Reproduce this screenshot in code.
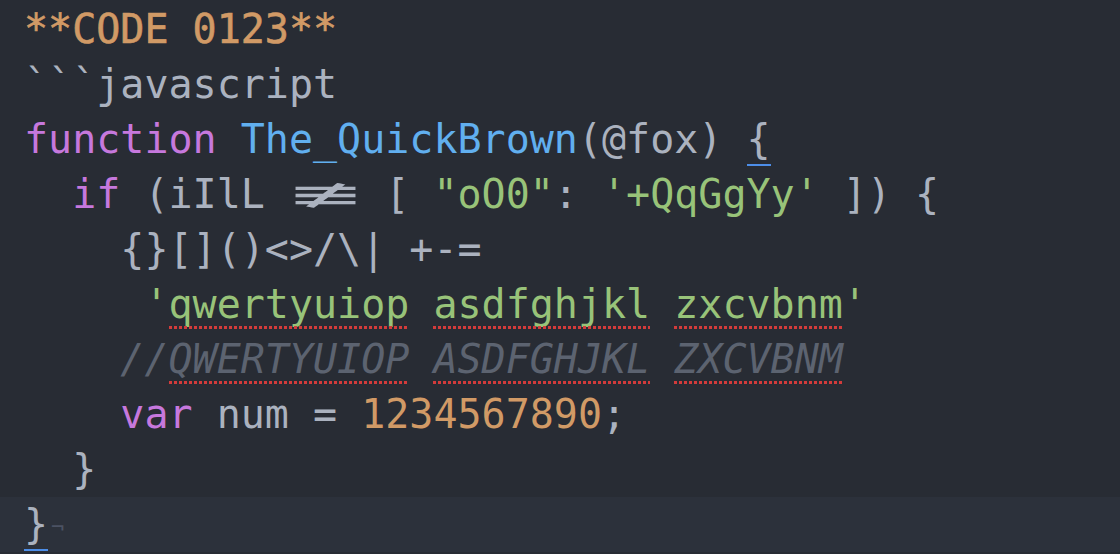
const orange = "text-[#d19a66]";
const purple = "text-[#c678dd]";
const blue = "text-[#61afef]";
const green = "text-[#98c379]";

// red dotted spell-check underline
const Typo = ({ children, className }: { children: React.ReactNode; className?: string }) => (
  <span className={`relative ${className ?? ""}`}>
    {children}
    <span className="absolute left-0 right-0 -bottom-[2px] h-[3px] bg-[repeating-linear-gradient(90deg,#d23b3b_0_3px,transparent_3px_5px)]" />
  </span>
);

// bracket match marker
const Match = ({ children }: { children: React.ReactNode }) => (
  <span className="relative">
    {children}
    <span className="absolute left-0 right-0 -bottom-[4px] h-[2px] bg-[#4d8ee8]" />
  </span>
);

const Line = ({ children, active }: { children?: React.ReactNode; active?: boolean }) => (
  <div className={`h-[55px] pl-[24px] whitespace-pre ${active ? "bg-[#2c313b]" : ""}`}>{children}</div>
);

export default function App() {
  return (
    <div className="h-[554px] w-full overflow-hidden bg-[#282c34] pt-[2px] font-['DejaVu_Sans_Mono',monospace] text-[40px] leading-[55px] text-[#abb2bf]">
      <Line>
        <span className={`${orange} [-webkit-text-stroke:0.6px_#d19a66]`}>**CODE 0123**</span>
      </Line>
      <Line>```javascript</Line>
      <Line>
        <span className={purple}>function</span> <span className={blue}>The_QuickBrown</span>(@fox){" "}
        <Match>{"{"}</Match>
      </Line>
      <Line>
        {"  "}
        <span className={purple}>if</span> (iIlL{" "}
        <span className="inline-block w-[3ch] text-center">
          <span className="inline-block scale-x-[2.9]">≢</span>
        </span>{" "}
        [ <span className={green}>"oO0"</span>: <span className={green}>'+QqGgYy'</span> ]) {"{"}
      </Line>
      <Line>{"    {}[]()<>/\\| +-="}</Line>
      <Line>
        <span className={green}>
          {"     '"}
          <Typo>qwertyuiop</Typo> <Typo>asdfghjkl</Typo> <Typo>zxcvbnm</Typo>'
        </span>
      </Line>
      <Line>
        <span className="italic text-[#5c6370]">
          {"    //"}
          <Typo>QWERTYUIOP</Typo> <Typo>ASDFGHJKL</Typo> <Typo>ZXCVBNM</Typo>
        </span>
      </Line>
      <Line>
        {"    "}
        <span className={purple}>var</span> num = <span className={orange}>1234567890</span>;
      </Line>
      <Line>{"  }"}</Line>
      <Line active>
        <Match>{"}"}</Match>
        <span className="ml-[3px] align-[4px] text-[22px] text-[#4b5263]">¬</span>
      </Line>
    </div>
  );
}
